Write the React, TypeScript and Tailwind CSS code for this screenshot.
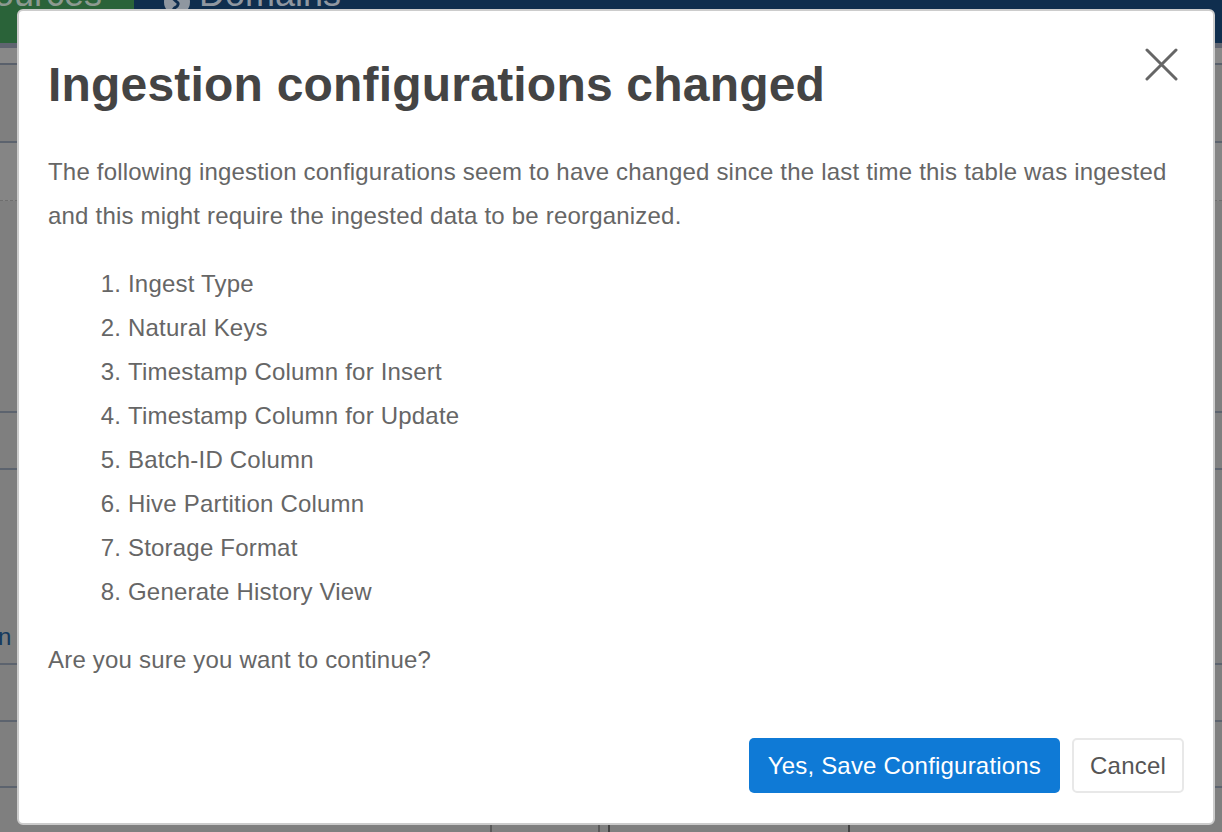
import React from 'react';

const items = [
  'Ingest Type',
  'Natural Keys',
  'Timestamp Column for Insert',
  'Timestamp Column for Update',
  'Batch-ID Column',
  'Hive Partition Column',
  'Storage Format',
  'Generate History View',
];

const Backdrop: React.FC = () => (
  <div className="flex h-full flex-col">
    {/* top navigation, dimmed */}
    <div className="flex h-[43px] shrink-0">
      <div className="w-[134px] overflow-hidden bg-[#2a6339]">
        <span className="-ml-[30px] -mt-[24px] block text-[36px] leading-[36px] text-[#8c9a90]">Sources</span>
      </div>
      <div className="flex flex-1 items-start gap-2 overflow-hidden bg-[#0f2e4e] pl-[29px]">
        <svg width="28" height="28" viewBox="0 0 28 28" className="-mt-[12px]">
          <circle cx="14" cy="14" r="13" fill="#8f97a0" />
          <path d="M8 10c3 0 4 3 6 4s1 4-1 5-3 3-3 5" stroke="#0f2e4e" strokeWidth="3" fill="none" />
        </svg>
        <span className="-mt-[24px] block text-[36px] leading-[36px] text-[#8f97a0]">Domains</span>
      </div>
    </div>
    <div className="h-[5px] shrink-0 bg-[#5f6470]" />
    <div className="h-[17px] shrink-0 border-b-2 border-[#59606b] bg-[#888888]" />
    <div className="h-[78px] shrink-0 border-b-2 border-[#5c636e]" />
    <div className="h-[58px] shrink-0 border-b border-dashed border-[#6e6e6e] bg-[#858585]" />
    <div className="h-[212px] shrink-0 border-b-2 border-[#5c636e]" />
    <div className="h-[57px] shrink-0 border-b-2 border-[#5c636e]" />
    <div className="flex h-[195px] shrink-0 items-end border-b-2 border-[#5c636e] pb-[14px]">
      <span className="-ml-[2px] text-[24px] leading-none text-[#163a5e]">n</span>
    </div>
    <div className="h-[57px] shrink-0 border-b-2 border-[#5c636e]" />
    <div className="h-[66px] shrink-0 border-b-2 border-[#5c636e]" />
    <div className="flex flex-1 pl-[490px]">
      <div className="h-[60px] w-[110px] border-x-2 border-[#5a5a5a] pl-[14px] pt-[2px] text-[20px] text-[#333]">Cancel</div>
      <div className="ml-[8px] h-[60px] w-[242px] border-x-2 border-[#444] pl-[14px] pt-[2px] text-[20px] text-[#333]">
        Save Configurations
      </div>
    </div>
  </div>
);

export default function App() {
  return (
    <div className="relative h-[832px] w-[1222px] overflow-hidden bg-[#7f7f7f] font-['Liberation_Sans',Arial,sans-serif]">
      <Backdrop />

      <div className="absolute left-[17px] top-[9px] w-[1198px] rounded-[6px] border-2 border-[#cccccc] bg-white px-[29px] pb-[30px] pt-[46px]">
        <button className="absolute right-[35px] top-[37px] h-[33px] w-[33px]" aria-label="Close">
          <svg width="33" height="33" viewBox="0 0 33 33">
            <path d="M2 2L31 31M31 2L2 31" stroke="#666666" strokeWidth="3" strokeLinecap="round" />
          </svg>
        </button>

        <h1 className="text-[48px] font-bold leading-[56px] tracking-[0.2px] text-[#444444]">
          Ingestion configurations changed
        </h1>

        <p className="mt-[37px] text-[24px] leading-[44px] tracking-[0.2px] text-[#666666]">
          The following ingestion configurations seem to have changed since the last time this table was ingested
          and this might require the ingested data to be reorganized.
        </p>

        <ol className="mt-[24px] list-decimal pl-[80px] text-[24px] leading-[44px] tracking-[0.2px] text-[#666666]">
          {items.map((item) => (
            <li key={item}>{item}</li>
          ))}
        </ol>

        <p className="mt-[24px] text-[24px] leading-[44px] tracking-[0.2px] text-[#666666]">
          Are you sure you want to continue?
        </p>

        <div className="mt-[56px] flex justify-end gap-[12px]">
          <button className="h-[55px] rounded-[5px] bg-[#0f7ad6] px-[19px] text-[24px] tracking-[0.2px] text-white">
            Yes, Save Configurations
          </button>
          <button className="h-[55px] rounded-[5px] border-2 border-[#e8e8e8] bg-white px-[16px] text-[24px] tracking-[0.2px] text-[#555555]">
            Cancel
          </button>
        </div>
      </div>
    </div>
  );
}
